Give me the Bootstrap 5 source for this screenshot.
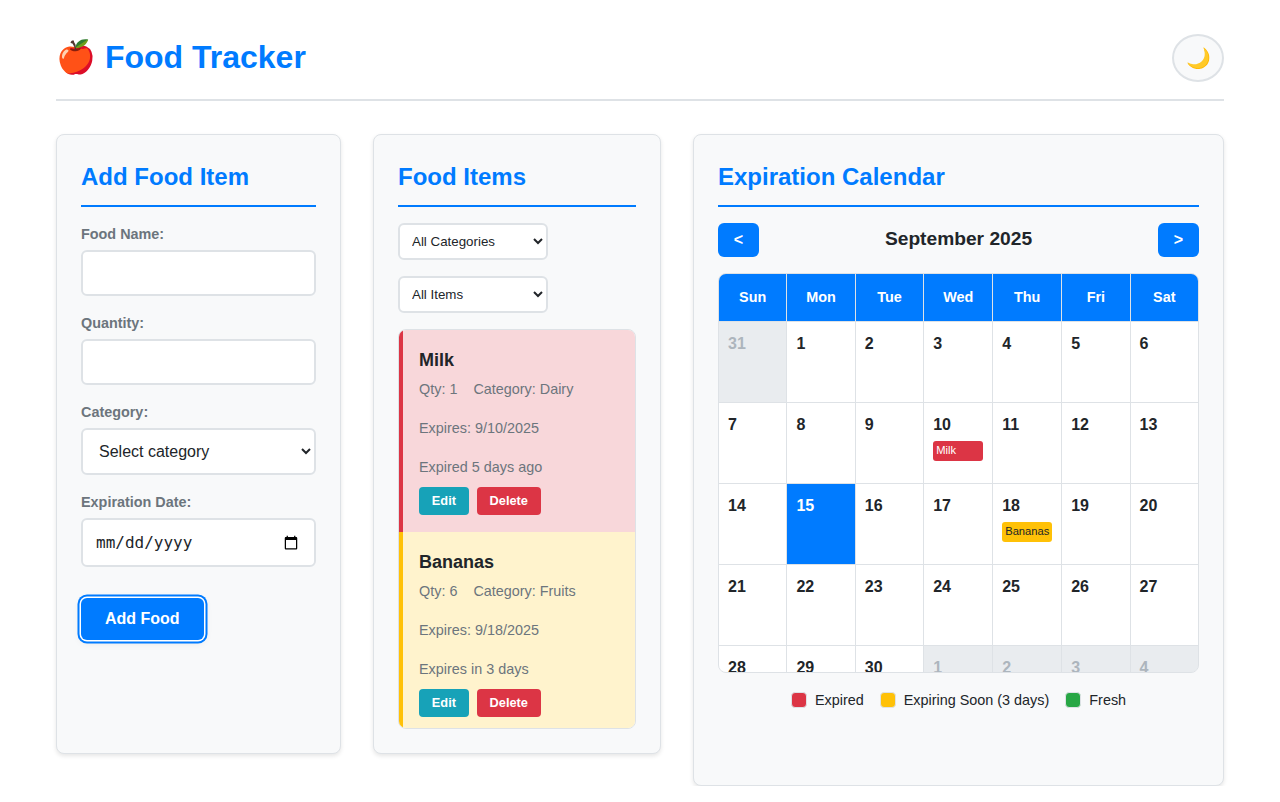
<!DOCTYPE html>
<html lang="en">
<head>
  <meta charset="UTF-8" />
  <meta name="viewport" content="width=device-width, initial-scale=1.0" />
  <title>Food Tracker</title>
  <link href="https://cdn.jsdelivr.net/npm/bootstrap@5.3.0/dist/css/bootstrap.min.css" rel="stylesheet">
  <style>
    body { font-family: "Liberation Sans", Arial, sans-serif; background: #fff; color: #212529; }
    .page-wrap { padding: 34px 56px 0; }
    .app-header { border-bottom: 2px solid #dee2e6; padding-bottom: 17px; margin-bottom: 33px; }
    .app-title { font-size: 32px; font-weight: 700; color: #007bff; margin: 0 0 2px; line-height: 46px; }
    .theme-toggle { width: 52px; height: 48px; border-radius: 50%; border: 2px solid #dee2e6; background: #f8f9fa; font-size: 20px; padding: 0; }
    .panels { display: grid; grid-template-columns: 285px 288px 531px; gap: 32px; align-items: start; }
    .panel { background: #f8f9fa; border: 1px solid #dee2e6; border-radius: 8px; box-shadow: 0 2px 4px rgba(0,0,0,.1); padding: 24px; height: 620px; }
    .panel-tall { height: 652px; }
    .panel-title { font-size: 24px; font-weight: 700; line-height: 36px; color: #007bff; border-bottom: 2px solid #007bff; padding-bottom: 10px; margin: 0 0 16px; }
    .field { margin-bottom: 16px; }
    .field-label { display: block; font-size: 14.4px; font-weight: 700; color: #6c757d; line-height: 23px; margin-bottom: 4px; }
    .field-input { display: block; width: 100%; height: 46px; border: 2px solid #dee2e6; border-radius: 6px; background: #fff; padding: 12px 16px; font-size: 16px; color: #212529; }
    select.field-input { height: 47px; padding: 12px; }
    input[type=date].field-input { height: 49px; padding: 12px 13px; font-family: "DejaVu Sans Mono", monospace; }
    .add-btn { height: 42px; margin-top: 15px; padding: 0 24px; border: 0; border-radius: 6px; background: #007bff; color: #fff; font-size: 16px; font-weight: 700; box-shadow: 0 0 0 1.5px #fff, 0 0 0 3.5px #007bff, 0 2px 8px rgba(0,0,0,.1); }
    .filter { display: block; width: 150px; height: 37px; border: 2px solid #dee2e6; border-radius: 6px; background: #fff; padding: 0 8px; font-size: 13.33px; color: #212529; margin-bottom: 16px; }
    .food-list { border-radius: 8px; overflow: hidden; border: 1px solid #dee2e6; }
    .food-row { border-left: 4px solid; padding: 17px 16px 16px; }
    .food-row.is-expired { background: #f8d7da; border-color: #dc3545; height: 202px; }
    .food-row.is-soon { background: #fff3cd; border-color: #ffc107; height: 196px; }
    .food-name { font-size: 18px; font-weight: 700; line-height: 27px; margin: 0 0 5px; }
    .food-meta { font-size: 14.4px; line-height: 21.6px; color: #6c757d; margin: 0 0 17.4px; }
    .food-meta span { margin-right: 12px; }
    .food-meta.last { margin-bottom: 8px; }
    .food-btn { font-size: 12.8px; font-weight: 700; color: #fff; border: 0; border-radius: 4px; height: 28px; padding: 0 12.8px; }
    .btn-edit { background: #17a2b8; }
    .btn-del { background: #dc3545; }
    .cal-nav { height: 34px; margin-bottom: 16px; }
    .cal-arrow { width: 41px; height: 34px; border: 0; border-radius: 6px; background: #007bff; color: #fff; font-size: 16px; font-weight: 700; padding: 0; }
    .cal-month { font-size: 19.2px; font-weight: 700; margin: 0 0 2px; }
    .cal-box { height: 400px; overflow: hidden; border: 1px solid #dee2e6; border-radius: 8px; }
    .cal-grid { display: grid; grid-template-columns: repeat(7, 1fr); grid-template-rows: 47px; grid-auto-rows: 80px; gap: 1px; background: #dee2e6; }
    .cal-head { background: #007bff; color: #fff; font-size: 14.4px; font-weight: 700; display: flex; align-items: center; justify-content: center; }
    .cal-day { background: #fff; padding: 10px 9px; font-size: 16px; font-weight: 700; line-height: 24px; }
    .cal-day.other { background: #e9ecef; color: #adb5bd; }
    .cal-day.today { background: #007bff; color: #fff; }
    .cal-chip { font-size: 11.2px; font-weight: 400; line-height: 16px; height: 20px; padding: 1px 3px; border-radius: 3px; margin-top: 4px; width: 50px; overflow: hidden; }
    .chip-red { background: #dc3545; color: #fff; }
    .chip-yellow { background: #ffc107; color: #212529; }
    .chip-green { background: #28a745; }
    .legend { margin-top: 16px; font-size: 14.4px; line-height: 22px; gap: 16px; }
    .legend-box { width: 16px; height: 16px; border-radius: 4px; border: 1px solid #dee2e6; margin-right: 8px; }
  </style>
</head>
<body>
  <div class="page-wrap">
    <header class="app-header d-flex justify-content-between align-items-center">
      <h1 class="app-title">🍎 Food Tracker</h1>
      <button class="theme-toggle" type="button">🌙</button>
    </header>

    <main class="panels">
      <!-- Add form -->
      <section class="panel">
        <h2 class="panel-title">Add Food Item</h2>
        <form>
          <div class="field">
            <label class="field-label">Food Name:</label>
            <input type="text" class="field-input">
          </div>
          <div class="field">
            <label class="field-label">Quantity:</label>
            <input type="number" class="field-input">
          </div>
          <div class="field">
            <label class="field-label">Category:</label>
            <select class="field-input"><option>Select category</option></select>
          </div>
          <div class="field">
            <label class="field-label">Expiration Date:</label>
            <input type="date" class="field-input">
          </div>
          <button type="button" class="add-btn">Add Food</button>
        </form>
      </section>

      <!-- List -->
      <section class="panel">
        <h2 class="panel-title">Food Items</h2>
        <select class="filter"><option>All Categories</option></select>
        <select class="filter"><option>All Items</option></select>
        <div class="food-list">
          <div class="food-row is-expired">
            <h3 class="food-name">Milk</h3>
            <p class="food-meta"><span>Qty: 1</span> Category: Dairy</p>
            <p class="food-meta">Expires: 9/10/2025</p>
            <p class="food-meta last">Expired 5 days ago</p>
            <div class="d-flex gap-2">
              <button class="food-btn btn-edit" type="button">Edit</button>
              <button class="food-btn btn-del" type="button">Delete</button>
            </div>
          </div>
          <div class="food-row is-soon">
            <h3 class="food-name">Bananas</h3>
            <p class="food-meta"><span>Qty: 6</span> Category: Fruits</p>
            <p class="food-meta">Expires: 9/18/2025</p>
            <p class="food-meta last">Expires in 3 days</p>
            <div class="d-flex gap-2">
              <button class="food-btn btn-edit" type="button">Edit</button>
              <button class="food-btn btn-del" type="button">Delete</button>
            </div>
          </div>
        </div>
      </section>

      <!-- Calendar -->
      <section class="panel panel-tall">
        <h2 class="panel-title">Expiration Calendar</h2>
        <div class="cal-nav d-flex justify-content-between align-items-center">
          <button class="cal-arrow" type="button">&lt;</button>
          <h3 class="cal-month">September 2025</h3>
          <button class="cal-arrow" type="button">&gt;</button>
        </div>
        <div class="cal-box"><div class="cal-grid" id="cal-grid"></div></div>
        <div class="legend d-flex justify-content-center align-items-center">
          <div class="d-flex align-items-center"><span class="legend-box chip-red"></span>Expired</div>
          <div class="d-flex align-items-center"><span class="legend-box chip-yellow"></span>Expiring Soon (3 days)</div>
          <div class="d-flex align-items-center"><span class="legend-box chip-green"></span>Fresh</div>
        </div>
      </section>
    </main>
  </div>

  <script>
    // september 2025, starts on monday
    const names = ["Sun", "Mon", "Tue", "Wed", "Thu", "Fri", "Sat"];
    const chips = { 10: ["Milk", "chip-red"], 18: ["Bananas", "chip-yellow"] };
    let html = names.map(n => `<div class="cal-head">${n}</div>`).join("");
    html += `<div class="cal-day other">31</div>`;
    for (let d = 1; d <= 30; d++) {
      const chip = chips[d] ? `<div class="cal-chip ${chips[d][1]}">${chips[d][0]}</div>` : "";
      html += `<div class="cal-day ${d === 15 ? "today" : ""}">${d}${chip}</div>`;
    }
    for (let d = 1; d <= 4; d++) html += `<div class="cal-day other">${d}</div>`;
    document.getElementById("cal-grid").innerHTML = html;
  </script>
  <script src="https://cdn.jsdelivr.net/npm/bootstrap@5.3.0/dist/js/bootstrap.bundle.min.js"></script>
</body>
</html>
